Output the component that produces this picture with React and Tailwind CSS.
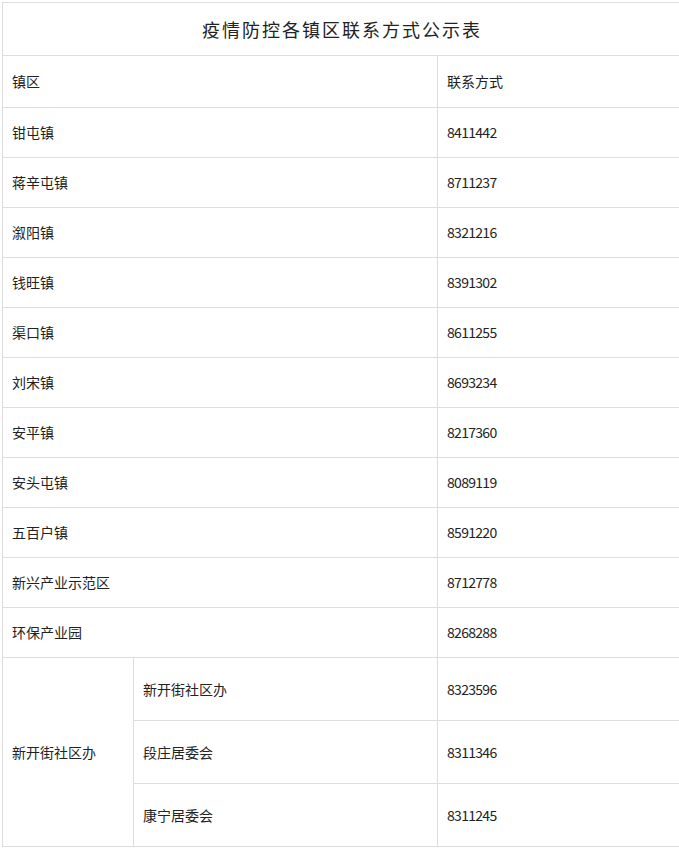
import React from "react";

const rows = [
  ["钳屯镇", "8411442"],
  ["蒋辛屯镇", "8711237"],
  ["溆阳镇", "8321216"],
  ["钱旺镇", "8391302"],
  ["渠口镇", "8611255"],
  ["刘宋镇", "8693234"],
  ["安平镇", "8217360"],
  ["安头屯镇", "8089119"],
  ["五百户镇", "8591220"],
  ["新兴产业示范区", "8712778"],
  ["环保产业园", "8268288"],
];

const sub = [
  ["新开街社区办", "8323596"],
  ["段庄居委会", "8311346"],
  ["康宁居委会", "8311245"],
];

const cell = "border border-[#dddddd] pl-[9px] align-middle";
const num = "tracking-[-0.7px]";

export default function App() {
  return (
    <div
      className="w-full overflow-hidden bg-white pt-[2px] pl-[2px] text-[#222] text-[14px]"
      style={{ fontFamily: '"Noto Sans CJK SC", "Noto Sans", sans-serif' }}
    >
      <table className="w-[680px] border-collapse table-fixed">
        <colgroup>
          <col className="w-[131px]" />
          <col className="w-[304px]" />
          <col />
        </colgroup>
        <tbody>
          <tr className="h-[53px]">
            <td colSpan={3} className="border border-[#dddddd] text-center text-[18px] tracking-[2px] align-middle">
              疫情防控各镇区联系方式公示表
            </td>
          </tr>
          <tr className="h-[52px]">
            <td colSpan={2} className={cell}>镇区</td>
            <td className={cell}>联系方式</td>
          </tr>
          {rows.map(([a, b]) => (
            <tr key={a} className="h-[50px]">
              <td colSpan={2} className={cell}>{a}</td>
              <td className={cell}><span className={num}>{b}</span></td>
            </tr>
          ))}
          {sub.map(([a, b], i) => (
            <tr key={a} className="h-[63px]">
              {i === 0 && (
                <td rowSpan={3} className={cell}>新开街社区办</td>
              )}
              <td className={cell}>{a}</td>
              <td className={cell}><span className={num}>{b}</span></td>
            </tr>
          ))}
        </tbody>
      </table>
    </div>
  );
}
